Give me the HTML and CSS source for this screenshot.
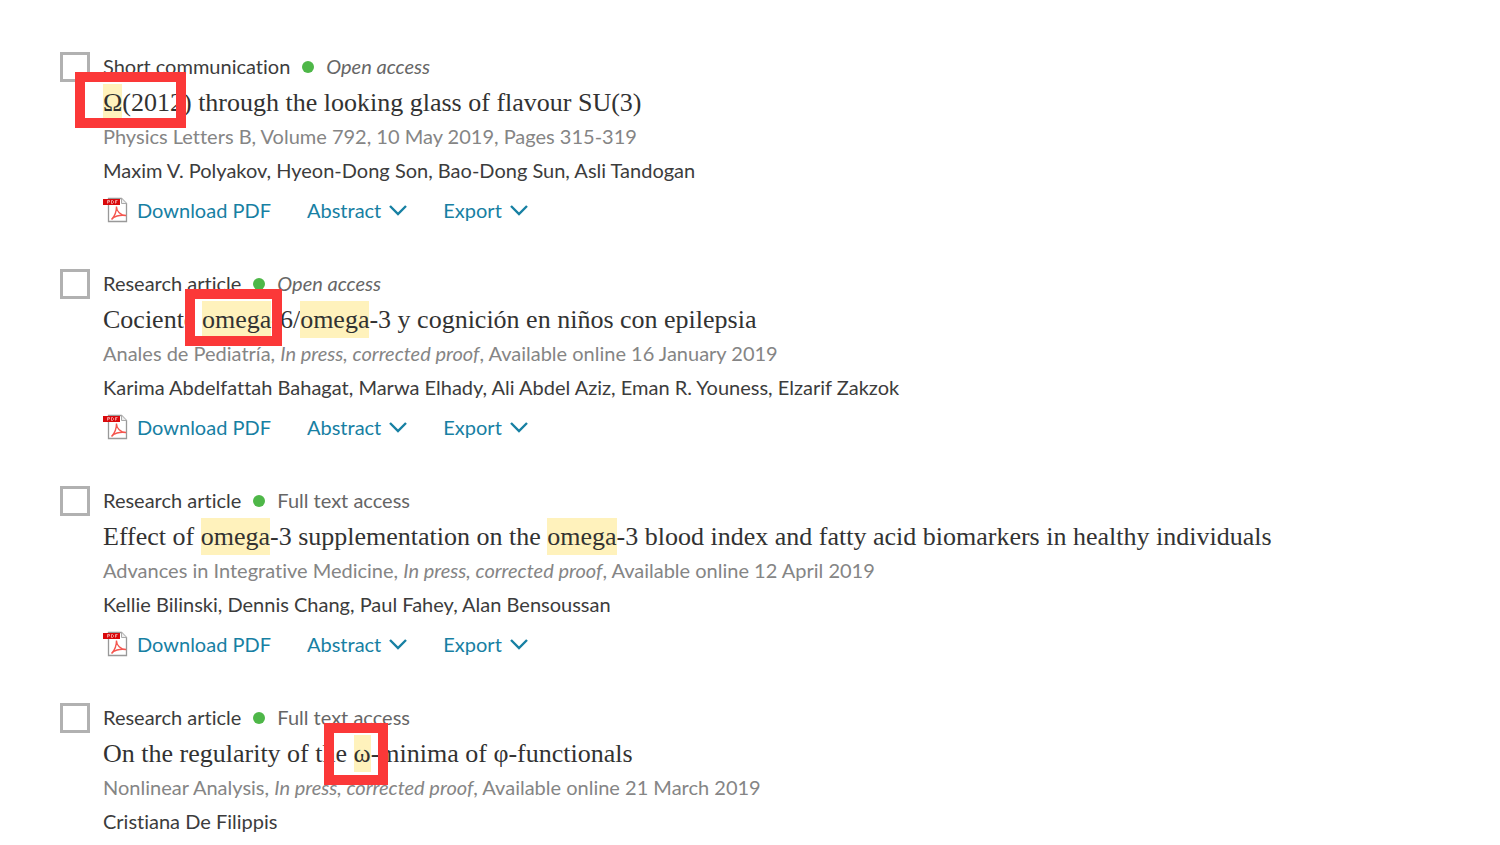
FILE: index.html
```html
<!DOCTYPE html>
<html lang="en">
<head>
<meta charset="utf-8">
<title>Search results</title>
<link rel="stylesheet" href="styles.css">
</head>
<body>
<svg class="sprite" aria-hidden="true">
  <symbol id="pdf" viewBox="0 0 25 26">
    <path d="M5.500 1.500h13l5 5v18h-18z" fill="#fff" stroke="#999" stroke-width="1.300"/>
    <path d="M18.500 1.500v5h5" fill="#eee" stroke="#aaa"/>
    <path d="M8.500 22.500C11 20 13.500 14.500 13.500 9.500M13.500 10c0 4 4 8.500 9.500 8.500M8.500 22.500c2-3 8-5 14.500-4" fill="none" stroke="#f4564f" stroke-width="1.400"/>
    <path d="M0 2h17v6H0z" fill="#d9090c"/>
    <path d="M4.500 6.500v-3h2v1.500h-2M8.500 3.500v3h1l1-1v-1l-1-1zM12.500 6.500v-3h2M12.500 5h1.500" fill="none" stroke="#f9b5b5" stroke-width=".8"/>
  </symbol>
  <symbol id="chevron" viewBox="0 0 18 12">
    <path d="M1 2l8 8 8-8" fill="none" stroke="#1780a3" stroke-width="2.400"/>
  </symbol>
</svg>
<main>
  <ol class="results">
    <li class="result">
      <input class="pick" type="checkbox" id="r1" aria-labelledby="t1">
      <article class="entry">
        <div class="kind"><span>Short communication</span><i class="dot"></i><em class="access">Open access</em></div>
        <h2 class="title" id="t1"><a href="#a1"><mark>Ω</mark>(2012) through the looking glass of flavour SU(3)</a></h2>
        <p class="source">Physics Letters B, Volume 792, 10 May 2019, Pages 315-319</p>
        <p class="authors">Maxim V. Polyakov, Hyeon-Dong Son, Bao-Dong Sun, Asli Tandogan</p>
        <div class="actions">
          <a class="download" href="#pdf1"><svg class="pdf"><use href="#pdf"/></svg>Download PDF</a>
          <button type="button">Abstract<svg class="chevron"><use href="#chevron"/></svg></button>
          <button type="button">Export<svg class="chevron"><use href="#chevron"/></svg></button>
        </div>
      </article>
      <span class="frame frame-symbol"></span>
    </li>
    <li class="result">
      <input class="pick" type="checkbox" id="r2" aria-labelledby="t2">
      <article class="entry">
        <div class="kind"><span>Research article</span><i class="dot"></i><em class="access">Open access</em></div>
        <h2 class="title" id="t2"><a href="#a2">Cociente <mark>omega</mark>-6/<mark>omega</mark>-3 y cognición en niños con epilepsia</a></h2>
        <p class="source">Anales de Pediatría, <em>In press, corrected proof</em>, Available online 16 January 2019</p>
        <p class="authors">Karima Abdelfattah Bahagat, Marwa Elhady, Ali Abdel Aziz, Eman R. Youness, Elzarif Zakzok</p>
        <div class="actions">
          <a class="download" href="#pdf2"><svg class="pdf"><use href="#pdf"/></svg>Download PDF</a>
          <button type="button">Abstract<svg class="chevron"><use href="#chevron"/></svg></button>
          <button type="button">Export<svg class="chevron"><use href="#chevron"/></svg></button>
        </div>
      </article>
      <span class="frame frame-word"></span>
    </li>
    <li class="result">
      <input class="pick" type="checkbox" id="r3" aria-labelledby="t3">
      <article class="entry">
        <div class="kind"><span>Research article</span><i class="dot"></i><span class="access">Full text access</span></div>
        <h2 class="title" id="t3"><a href="#a3">Effect of <mark>omega</mark>-3 supplementation on the <mark>omega</mark>-3 blood index and fatty acid biomarkers in healthy individuals</a></h2>
        <p class="source">Advances in Integrative Medicine, <em>In press, corrected proof</em>, Available online 12 April 2019</p>
        <p class="authors">Kellie Bilinski, Dennis Chang, Paul Fahey, Alan Bensoussan</p>
        <div class="actions">
          <a class="download" href="#pdf3"><svg class="pdf"><use href="#pdf"/></svg>Download PDF</a>
          <button type="button">Abstract<svg class="chevron"><use href="#chevron"/></svg></button>
          <button type="button">Export<svg class="chevron"><use href="#chevron"/></svg></button>
        </div>
      </article>
    </li>
    <li class="result">
      <input class="pick" type="checkbox" id="r4" aria-labelledby="t4">
      <article class="entry">
        <div class="kind"><span>Research article</span><i class="dot"></i><span class="access">Full text access</span></div>
        <h2 class="title" id="t4"><a href="#a4">On the regularity of the <mark>ω</mark>-minima of φ-functionals</a></h2>
        <p class="source">Nonlinear Analysis, <em>In press, corrected proof</em>, Available online 21 March 2019</p>
        <p class="authors">Cristiana De Filippis</p>
      </article>
      <span class="frame frame-letter"></span>
    </li>
  </ol>
</main>
</body>
</html>
```
FILE: styles.css
```css
* { box-sizing: border-box; }
body {
  margin: 0;
  background: #fff;
  color: #3c3c3c;
  font: 20px/32px Lato, "Noto Sans", sans-serif;
  font-variant-ligatures: none;
}
.sprite { position: absolute; width: 0; height: 0; }
.results {
  list-style: none;
  margin: 0;
  padding: 50px 60px 0;
  display: grid;
  gap: 41px;
}
.result {
  position: relative;
  display: flex;
  align-items: flex-start;
  gap: 13px;
}
.pick {
  appearance: none;
  flex: none;
  width: 30px;
  height: 30px;
  margin: 2px 0 0;
  border: 3px solid #b1b1b1;
  background: #fff;
}
.pick:checked { background: #1780a3; }
.entry { flex: 1; min-width: 0; }
.kind { display: flex; align-items: center; }
.dot {
  width: 12px;
  height: 12px;
  margin: 2px 12px 0;
  border-radius: 50%;
  background: #4eb748;
}
.access { color: #666; }
.title {
  margin: 2px 0 0;
  font: 400 26px/37px "Liberation Serif", serif;
}
.title a { color: #323232; text-decoration: none; }
mark {
  display: inline-block;
  background: #fff2bc;
  color: inherit;
}
.source, .authors { margin: 0; }
.source { color: #858585; line-height: 30px; }
.authors { line-height: 38px; }
.actions {
  display: flex;
  align-items: center;
  gap: 36px;
  height: 32px;
  margin-top: 5px;
}
.actions a, .actions button {
  display: flex;
  align-items: center;
  padding: 0;
  border: 0;
  background: none;
  color: #1780a3;
  font: inherit;
  text-decoration: none;
  cursor: pointer;
}
.download { gap: 9px; }
.actions button { gap: 8px; }
.pdf { width: 25px; height: 26px; }
.chevron { width: 18px; height: 12px; }
.frame {
  position: absolute;
  border: 10px solid #fb3838;
  pointer-events: none;
}
.frame-symbol { left: 15px; top: 22px; width: 111px; height: 56px; }
.frame-word { left: 125px; top: 22px; width: 97px; height: 57px; }
.frame-letter { left: 264px; top: 22px; width: 64px; height: 62px; }
```
